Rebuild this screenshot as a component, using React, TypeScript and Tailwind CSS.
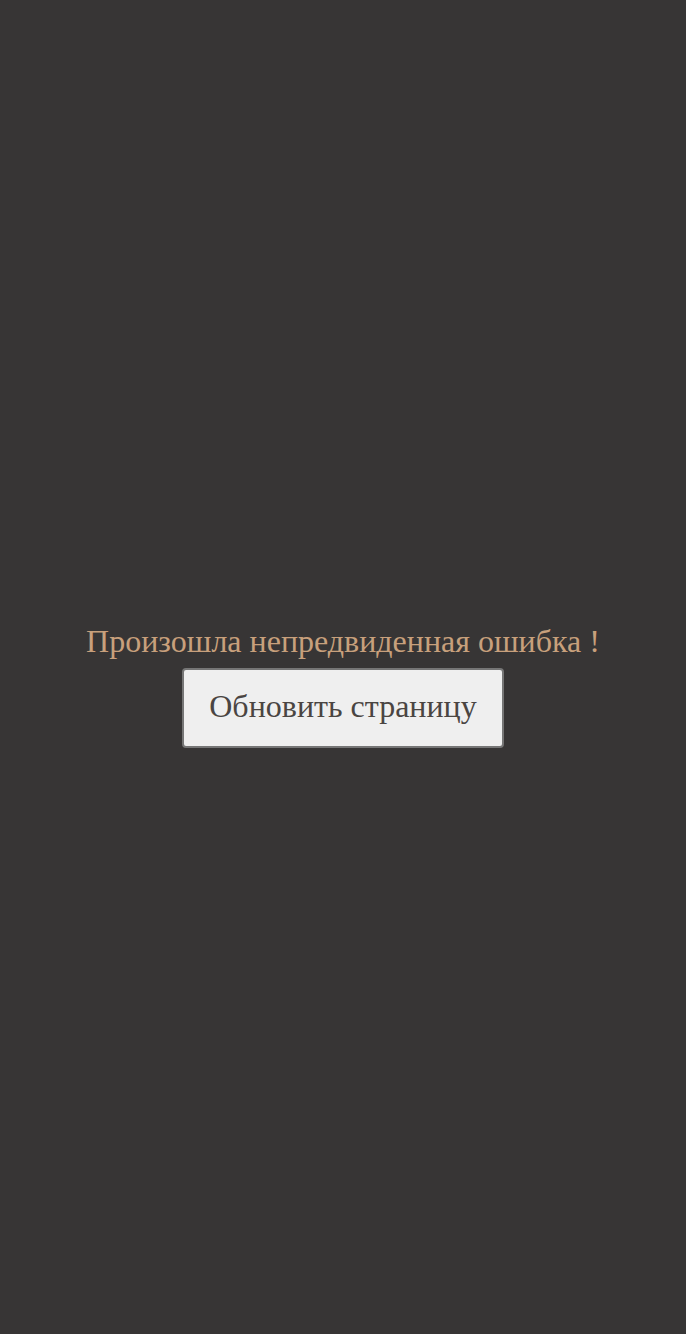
import React from "react";

export default function App() {
  return (
    <div
      className="min-h-[1334px] w-full bg-[#373535] flex flex-col items-center justify-center"
      style={{ fontFamily: '"Liberation Serif", serif' }}
    >
      <div className="flex flex-col items-center pt-[37px]">
        <p className="text-[32px] leading-[37px] text-[#c8a07c]">Произошла непредвиденная ошибка !</p>
        <button className="mt-[8px] w-[322px] h-[80px] pb-[5px] bg-[#efefef] border-2 border-[#767676] rounded-[4px] text-[32px] text-[#4a4542]">
          Обновить страницу
        </button>
      </div>
    </div>
  );
}
